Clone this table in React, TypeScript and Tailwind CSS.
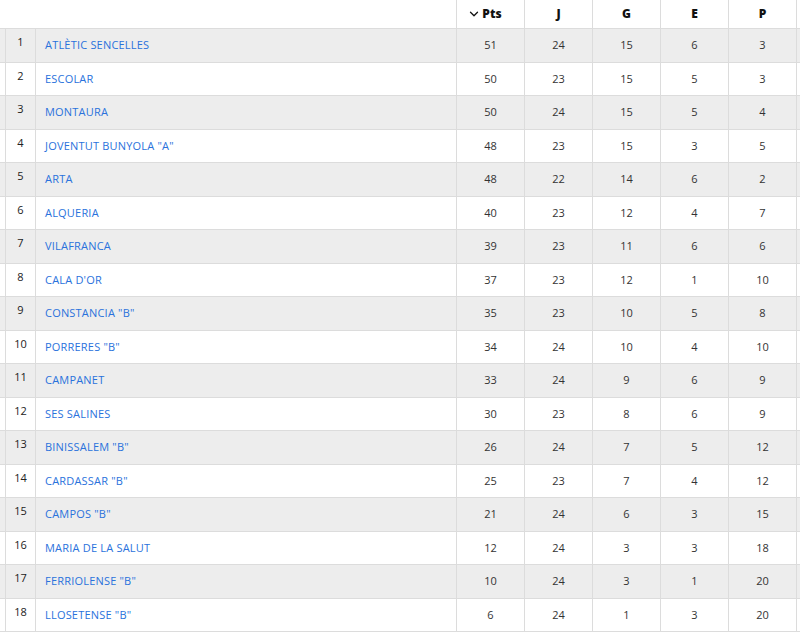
import { ChevronDown } from 'lucide-react';

interface Team {
  pos: number;
  name: string;
  pts: number;
  j: number;
  g: number;
  e: number;
  p: number;
}

const teams: Team[] = [
  { pos: 1, name: 'ATLÈTIC SENCELLES', pts: 51, j: 24, g: 15, e: 6, p: 3 },
  { pos: 2, name: 'ESCOLAR', pts: 50, j: 23, g: 15, e: 5, p: 3 },
  { pos: 3, name: 'MONTAURA', pts: 50, j: 24, g: 15, e: 5, p: 4 },
  { pos: 4, name: 'JOVENTUT BUNYOLA "A"', pts: 48, j: 23, g: 15, e: 3, p: 5 },
  { pos: 5, name: 'ARTA', pts: 48, j: 22, g: 14, e: 6, p: 2 },
  { pos: 6, name: 'ALQUERIA', pts: 40, j: 23, g: 12, e: 4, p: 7 },
  { pos: 7, name: 'VILAFRANCA', pts: 39, j: 23, g: 11, e: 6, p: 6 },
  { pos: 8, name: "CALA D'OR", pts: 37, j: 23, g: 12, e: 1, p: 10 },
  { pos: 9, name: 'CONSTANCIA "B"', pts: 35, j: 23, g: 10, e: 5, p: 8 },
  { pos: 10, name: 'PORRERES "B"', pts: 34, j: 24, g: 10, e: 4, p: 10 },
  { pos: 11, name: 'CAMPANET', pts: 33, j: 24, g: 9, e: 6, p: 9 },
  { pos: 12, name: 'SES SALINES', pts: 30, j: 23, g: 8, e: 6, p: 9 },
  { pos: 13, name: 'BINISSALEM "B"', pts: 26, j: 24, g: 7, e: 5, p: 12 },
  { pos: 14, name: 'CARDASSAR "B"', pts: 25, j: 23, g: 7, e: 4, p: 12 },
  { pos: 15, name: 'CAMPOS "B"', pts: 21, j: 24, g: 6, e: 3, p: 15 },
  { pos: 16, name: 'MARIA DE LA SALUT', pts: 12, j: 24, g: 3, e: 3, p: 18 },
  { pos: 17, name: 'FERRIOLENSE "B"', pts: 10, j: 24, g: 3, e: 1, p: 20 },
  { pos: 18, name: 'LLOSETENSE "B"', pts: 6, j: 24, g: 1, e: 3, p: 20 },
];

const numCell = 'w-[68px] shrink-0 border-l border-[#dcdcdc] flex items-center justify-center';

export default function App() {
  return (
    <div
      className="w-[800px] h-[638px] overflow-hidden bg-white text-[11px] font-medium text-[#333]"
      style={{ fontFamily: '"Open Sans", "Liberation Sans", sans-serif' }}
    >
      {/* cabecera */}
      <div className="flex h-[29px] border-b border-[#dcdcdc] font-extrabold text-[#111] text-[12px]">
        <div className="w-[456px] shrink-0" />
        <div className={`${numCell} pr-[12px]`}>
          <ChevronDown className="w-[14px] h-[14px] mr-[1px]" strokeWidth={2.2} />
          Pts
        </div>
        <div className={numCell}>J</div>
        <div className={numCell}>G</div>
        <div className={numCell}>E</div>
        <div className={numCell}>P</div>
        <div className={numCell} />
      </div>

      {/* filas */}
      {teams.map((t, i) => (
        <div
          key={t.pos}
          className={`flex border-b border-[#dcdcdc] ${i % 2 === 0 ? 'bg-[#ededed] h-[34px]' : 'bg-white h-[33px]'}`}
        >
          <div className="w-[5px] shrink-0" />
          <div className="w-[30px] shrink-0 border-l border-[#dcdcdc] text-center pt-[5px] text-[#222]">
            {t.pos}
          </div>
          <div className="w-[421px] shrink-0 border-l border-[#dcdcdc] flex items-center pl-[9px] text-[#2a72dc] tracking-[0.2px]">
            {t.name}
          </div>
          <div className={numCell}>{t.pts}</div>
          <div className={numCell}>{t.j}</div>
          <div className={numCell}>{t.g}</div>
          <div className={numCell}>{t.e}</div>
          <div className={numCell}>{t.p}</div>
          <div className={numCell} />
        </div>
      ))}
    </div>
  );
}
